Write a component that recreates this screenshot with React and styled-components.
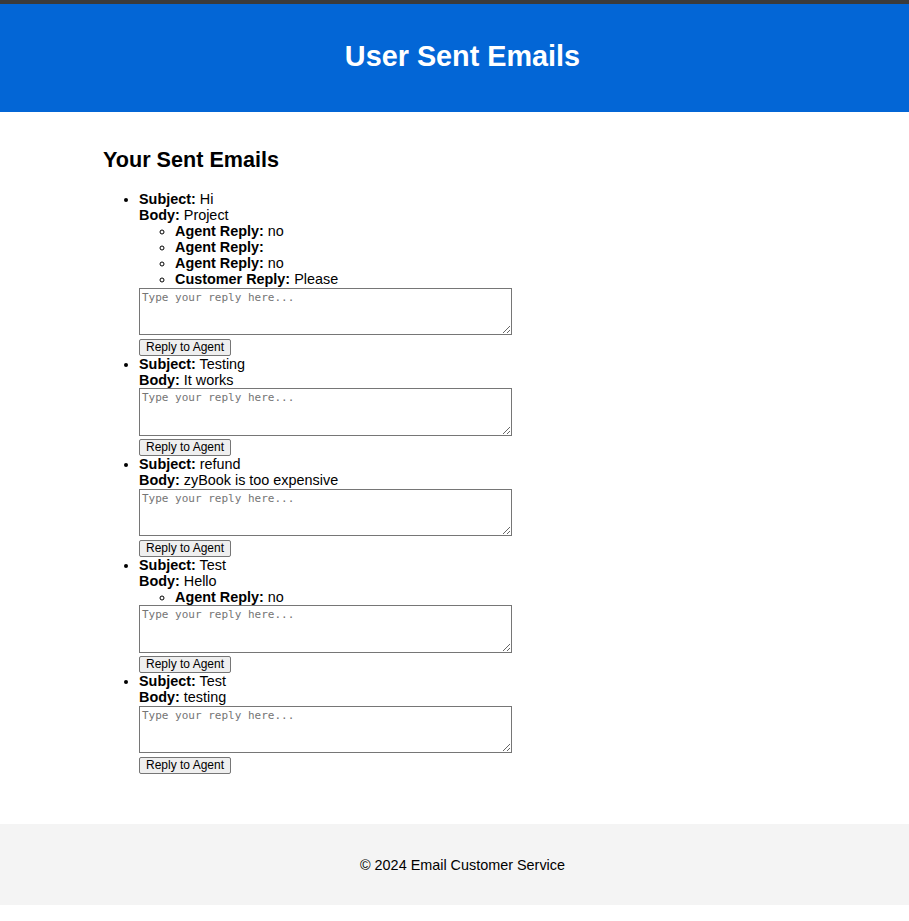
import React from "react";
import styled, { createGlobalStyle } from "styled-components";

const GlobalStyle = createGlobalStyle`
  html, body {
    margin: 0;
    padding: 0;
    background: #ffffff;
  }
  body {
    font-family: "Liberation Sans", Arial, sans-serif;
    font-size: 14.4px;
    color: #000000;
  }
`;

const Header = styled.header`
  box-sizing: border-box;
  background: #0366d6;
  border-top: 4px solid #3b3b3b;
  padding: 17px 0 19px 16px;
  text-align: center;
  color: #ffffff;
`;

const Title = styled.h1`
  margin: 19.3px 0;
  font-size: 28.8px;
  line-height: 33px;
  font-weight: 700;
`;

const Main = styled.main`
  width: 703px;
  margin: 0 auto;
  padding: 0 0 50.5px;
`;

const SectionTitle = styled.h2`
  margin: 36px 0 19.5px;
  font-size: 21.6px;
  line-height: 24px;
  font-weight: 700;
`;

const EmailList = styled.ul`
  margin: 0;
  padding-left: 36px;
  list-style: disc;
  line-height: 16px;
`;

const EmailItem = styled.li`
  margin: 0;
`;

const Line = styled.div`
  line-height: 16px;
`;

const ReplyList = styled.ul`
  margin: 0;
  padding-left: 36px;
  list-style: circle;
`;

const ReplyItem = styled.li`
  line-height: 16px;
`;

const ReplyBox = styled.textarea`
  display: block;
  box-sizing: border-box;
  width: 373px;
  height: 47.5px;
  margin: 0.5px 0 0;
  padding: 2px;
  border: 1px solid #767676;
  border-radius: 0;
  font-family: "DejaVu Sans Mono", "Liberation Mono", monospace;
  font-size: 11px;
  line-height: 13px;
  color: #000;
  background: #fff;

  &::placeholder {
    color: #757575;
  }
`;

const ReplyButton = styled.button`
  display: block;
  box-sizing: border-box;
  height: 17px;
  margin: 3.5px 0 0;
  padding: 0 6px;
  border: 1px solid #767676;
  border-radius: 2px;
  background: #efefef;
  color: #000;
  font-family: "Liberation Sans", Arial, sans-serif;
  font-size: 12px;
  line-height: 15px;
  cursor: pointer;
`;

const Footer = styled.footer`
  box-sizing: border-box;
  background: #f4f4f4;
  padding: 33px 0 31px 16px;
  text-align: center;
`;

const FooterText = styled.p`
  margin: 0;
  line-height: 17px;
`;

const emails = [
  {
    subject: "Hi",
    body: "Project",
    replies: [
      { who: "Agent Reply", text: "no" },
      { who: "Agent Reply", text: "" },
      { who: "Agent Reply", text: "no" },
      { who: "Customer Reply", text: "Please" },
    ],
  },
  { subject: "Testing", body: "It works", replies: [] },
  { subject: "refund", body: "zyBook is too expensive", replies: [] },
  {
    subject: "Test",
    body: "Hello",
    replies: [{ who: "Agent Reply", text: "no" }],
  },
  { subject: "Test", body: "testing", replies: [] },
];

export default function App() {
  return (
    <>
      <GlobalStyle />
      <Header>
        <Title>User Sent Emails</Title>
      </Header>
      <Main>
        <SectionTitle>Your Sent Emails</SectionTitle>
        <EmailList>
          {emails.map((e, i) => (
            <EmailItem key={i}>
              <Line>
                <strong>Subject:</strong> {e.subject}
              </Line>
              <Line>
                <strong>Body:</strong> {e.body}
              </Line>
              {e.replies.length > 0 && (
                <ReplyList>
                  {e.replies.map((r, j) => (
                    <ReplyItem key={j}>
                      <strong>{r.who}:</strong> {r.text}
                    </ReplyItem>
                  ))}
                </ReplyList>
              )}
              <ReplyBox placeholder="Type your reply here..." />
              <ReplyButton type="button">Reply to Agent</ReplyButton>
            </EmailItem>
          ))}
        </EmailList>
      </Main>
      <Footer>
        <FooterText>© 2024 Email Customer Service</FooterText>
      </Footer>
    </>
  );
}
